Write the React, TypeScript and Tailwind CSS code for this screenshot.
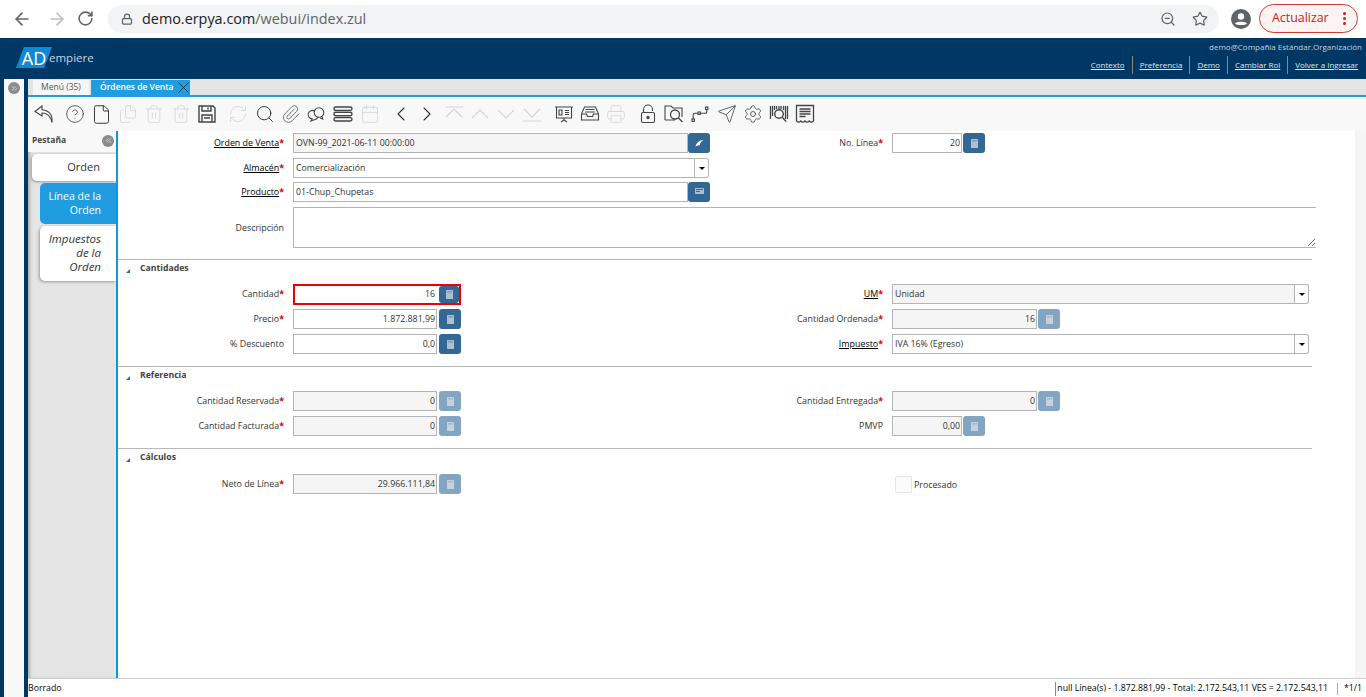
import { ArrowLeft, ArrowRight, RotateCw, Lock, ZoomOut, Star, CircleHelp, File, Files, Trash2, Save, RefreshCw, Search, Paperclip, Calendar, ChevronLeft, ChevronRight, Printer, Send, Settings, ChevronsLeft, ChevronsRight } from "lucide-react";
import type { ReactNode } from "react";

const font = "font-['Open_Sans',sans-serif]";

// small svg wrapper for the toolbar drawings lucide does not have
const Svg = ({ children, muted }: { children: ReactNode; muted?: boolean }) => (
  <svg width="20" height="20" viewBox="0 0 20 20" fill="none" stroke={muted ? "#d4d4d4" : "#444"} strokeWidth="1.1">
    {children}
  </svg>
);

const lucide = { size: 20, strokeWidth: 1 };

const toolbar: { icon: ReactNode; group?: boolean }[] = [
  { icon: <Svg><path d="M8 2 L1 7.5 L8 12 L8 9 C13 9 16.5 12 18 18.5 C18.8 10.5 15 6.5 8 5.8 Z" /></Svg> },
  { group: true, icon: <CircleHelp {...lucide} color="#444" /> },
  { icon: <File size={21} strokeWidth={1.1} color="#333" /> },
  { icon: <Files {...lucide} color="#d4d4d4" /> },
  { icon: <Trash2 {...lucide} color="#d4d4d4" /> },
  { icon: <Trash2 {...lucide} color="#d4d4d4" /> },
  { icon: <Svg><path d="M2 2h14l2 2v14H2z" strokeWidth="1.4" /><path d="M5 2v5h9V2M11 3.5v2M5 18v-7h10v7M7 14h6" strokeWidth="1.4" /></Svg> },
  { group: true, icon: <RefreshCw {...lucide} color="#d4d4d4" /> },
  { icon: <Search size={20} strokeWidth={1.2} color="#333" /> },
  { icon: <Paperclip {...lucide} color="#555" /> },
  { icon: <Svg><circle cx="12" cy="8.500" r="4.800" /><path d="M7.500 7 A4.200 4.200 0 1 0 5.200 14.800 L4 17 L8 15.500 A4.200 4.200 0 0 0 11 13.200" /><path d="M15 12.500l.8 2.500-2.600-.7" /></Svg> },
  { icon: <Svg><rect x="1" y="3" width="18" height="3.4" rx="1.7" strokeWidth="1.4" /><rect x="1" y="8.3" width="18" height="3.4" rx="1.7" strokeWidth="1.4" /><rect x="1" y="13.6" width="18" height="3.4" rx="1.7" strokeWidth="1.4" /></Svg> },
  { icon: <Calendar {...lucide} color="#d4d4d4" /> },
  { group: true, icon: <ChevronLeft size={24} strokeWidth={1.1} color="#333" /> },
  { icon: <ChevronRight size={24} strokeWidth={1.1} color="#333" /> },
  { icon: <Svg muted><path d="M1 3h18M2 13l8-8 8 8" /></Svg> },
  { icon: <Svg muted><path d="M2 14l8-8 8 8" /></Svg> },
  { icon: <Svg muted><path d="M2 6l8 8 8-8" /></Svg> },
  { icon: <Svg muted><path d="M2 5l8 8 8-8M1 17h18" /></Svg> },
  { group: true, icon: <Svg><path d="M1 3h18M2.5 3v11h15V3M10 14v2M7 18l3-2 3 2" /><path d="M5 6h3v5H5zM11 6.5h4M11 8.500h4M11 10.500h4" /></Svg> },
  { icon: <Svg><path d="M4.500 3h11l3 7v6h-17v-6zM1.500 10h5l1 2.500h5l1-2.500h5M5.500 5.500h9M5 8h10" strokeWidth="1.1" /></Svg> },
  { icon: <Printer {...lucide} color="#d4d4d4" /> },
  { group: true, icon: <Svg><path d="M5.500 8.500V5.500a4.500 4.500 0 0 1 9 0V7" /><rect x="3.500" y="8.500" width="13" height="10" rx="1.500" /><circle cx="10" cy="13.500" r="1.100" fill="#444" /></Svg> },
  { icon: <Svg><path d="M1 16V2h6l2 2h9v9M1 16h10" /><circle cx="11" cy="10.500" r="4.500" strokeWidth="1.3" /><path d="M14.500 14l4 4" strokeWidth="1.3" /></Svg> },
  { icon: <Svg><rect x="2" y="15" width="2.400" height="2.400" /><rect x="8" y="8" width="2.400" height="2.400" /><rect x="15.500" y="3" width="2.400" height="2.400" /><path d="M3.200 15v-4.500c0-1 .5-1.300 1.300-1.300H8M10.400 9.200h5c1 0 1.400-.5 1.400-1.300V5.400" /></Svg> },
  { icon: <Send {...lucide} color="#444" /> },
  { icon: <Settings {...lucide} color="#444" /> },
  { icon: <Svg><path d="M1.500 2v13M3.500 2v10M5.500 2v4M7.500 2v3M10 2v3M12 2v3M14.500 2v4M16.500 2v13M18.500 2v13" strokeWidth="1.300" /><circle cx="10" cy="10" r="4.300" fill="#f8f8f8" strokeWidth="1.400" /><path d="M13.200 13.200l4 4.300" strokeWidth="1.400" /></Svg> },
  { icon: <Svg><path d="M1.500 1.500h17v15.500c-1.500 1.500-3 1.500-4.200 0-1.200 1.500-2.800 1.500-4.300 0-1.500 1.500-3 1.500-4.300 0-1.200 1.500-2.700 1.500-4.200 0z" strokeWidth="1.300" /><path d="M4.500 5h11M4.500 7.500h11M4.500 10h11M4.500 12.500h6" strokeWidth="1.300" /></Svg> },
];

const CalcIcon = ({ off }: { off?: boolean }) => (
  <svg width="7" height="9" viewBox="0 0 7 9">
    <rect width="7" height="9" rx="0.5" fill={off ? "#c3d2de" : "#aebfce"} />
    <rect x="1" y="1" width="5" height="1.600" fill={off ? "#a4bbce" : "#7f9db6"} />
  </svg>
);

const CalcBtn = ({ off, className = "" }: { off?: boolean; className?: string }) => (
  <div className={`flex h-5 w-[22px] shrink-0 items-center justify-center rounded-[3px] ${off ? "bg-[#84a5c1]" : "bg-[#336796]"} ${className}`}>
    <CalcIcon off={off} />
  </div>
);

const Label = ({ text, req, link }: { text: string; req?: boolean; link?: boolean }) => (
  <div className="mr-[9px] w-[166px] shrink-0 truncate text-right text-[8.900px] leading-5 text-[#333]">
    <span className={link ? "text-black underline" : ""}>{text}</span>
    {req && <span className="font-bold text-[#e00000]">*</span>}
  </div>
);

const Num = ({ value, w, off, gap = "ml-[2px]" }: { value: string; w: string; off?: boolean; gap?: string }) => (
  <>
    <div className={`h-5 ${w} border border-[#b4b4b4] pl-[2px] pr-[1px] text-right text-[8.800px] leading-[18px] text-[#333] ${off ? "bg-[#f5f5f5]" : "bg-white"}`}>{value}</div>
    <CalcBtn off={off} className={gap} />
  </>
);

const Combo = ({ value, w, off }: { value: string; w: string; off?: boolean }) => (
  <div className="flex h-5">
    <div className={`h-5 ${w} border border-[#b4b4b4] px-[2px] text-[8.800px] leading-[18px] text-[#333] ${off ? "bg-[#f5f5f5]" : "bg-white"}`}>{value}</div>
    <div className="flex h-5 w-[14px] items-center justify-center rounded-r-[3px] border border-l-0 border-[#b4b4b4] bg-white">
      <div className="h-0 w-0 border-x-[3px] border-t-[3px] border-x-transparent border-t-black" />
    </div>
  </div>
);

const Row = ({ left, right, className = "mb-[5px]" }: { left: ReactNode; right?: ReactNode; className?: string }) => (
  <div className={`flex h-5 ${className}`}>
    <div className="flex w-[599px] shrink-0">{left}</div>
    <div className="flex">{right}</div>
  </div>
);

const Section = ({ title, className }: { title: string; className: string }) => (
  <div className={className}>
    <div className="mr-[43px] border-t border-[#b8b8b8]" />
    <div className="flex h-[24px] items-start pt-[2px]">
      <div className="ml-[8px] mt-[7px] h-0 w-0 border-b-[4px] border-l-[4px] border-b-[#1c6fb8] border-l-transparent" />
      <div className="ml-[10px] text-[8.700px] font-bold leading-[12px] text-[#444]">{title}</div>
    </div>
  </div>
);

export default function App() {
  const links = ["Contexto", "Preferencia", "Demo", "Cambiar Rol", "Volver a Ingresar"];

  return (
    <div className={`flex h-[697px] w-full flex-col overflow-hidden bg-white ${font}`}>
      {/* browser bar */}
      <div className="flex h-[38px] shrink-0 items-center bg-white pb-[1px]">
        <ArrowLeft size={20} strokeWidth={2} color="#5f6368" className="ml-[12px]" />
        <ArrowRight size={20} strokeWidth={2} color="#bcbec1" className="ml-[15px]" />
        <RotateCw size={17} strokeWidth={2.2} color="#5f6368" className="ml-[10px]" />
        <div className="ml-[14px] flex h-[28px] w-[1111px] items-center rounded-full bg-[#f1f3f4] pl-[13px] pr-[10px]">
          <Lock size={12} strokeWidth={2.5} color="#5f6368" />
          <div className="ml-[9px] text-[14.400px] text-[#5f6368]">
            <span className="text-[#202124]">demo.erpya.com</span>/webui/index.zul
          </div>
          <ZoomOut size={16} strokeWidth={1.8} color="#5f6368" className="ml-auto mr-[16px]" />
          <Star size={16} strokeWidth={1.8} color="#5f6368" className="mr-[1px]" />
        </div>
        <svg width="20" height="20" viewBox="0 0 20 20" className="ml-[12px]">
          <circle cx="10" cy="10" r="10" fill="#5f6368" />
          <circle cx="10" cy="7.500" r="3.200" fill="white" />
          <path d="M4 14.500c1.500-2.500 10.500-2.500 12 0-1.500 2-10.500 2-12 0z" fill="white" />
        </svg>
        <div className="ml-[8px] flex h-[29px] w-[99px] items-center rounded-full border border-[#d33a31] bg-[#fdf3f2] pl-[12px] text-[12.400px] text-[#c5221f]">
          Actualizar
          <div className="ml-[14px] flex flex-col gap-[2px]">
            <div className="h-[3px] w-[3px] rounded-full bg-[#c5221f]" />
            <div className="h-[3px] w-[3px] rounded-full bg-[#c5221f]" />
            <div className="h-[3px] w-[3px] rounded-full bg-[#c5221f]" />
          </div>
        </div>
      </div>

      {/* app header */}
      <div className="flex h-[41px] shrink-0 justify-between bg-[#003764]">
        <div className="ml-[16px] mt-[9px] flex h-[21px] items-center">
          <div className="flex h-[21px] w-[36px] items-center justify-center bg-[#0f8ad2] text-[18px] leading-none text-white [clip-path:polygon(22%_0,100%_0,78%_100%,0_100%)]">AD</div>
          <div className="-ml-[3px] text-[11.500px] text-[#c9d6e2]">empiere</div>
        </div>
        <div className="flex flex-col items-end pr-[4px]">
          <div className="mt-[3px] text-[8px] leading-[11px] text-[#c2d0dc]">demo@Compañía Estándar.Organización</div>
          <div className="mr-[4px] mt-[4px] flex h-[18px] items-center text-[8px] text-[#dfe7ee]">
            {links.map((l, i) => (
              <div key={l} className={`flex h-[18px] items-center ${i > 0 ? "ml-[7px] border-l border-[#8f8a78] pl-[7px]" : ""}`}>
                <span className="underline">{l}</span>
              </div>
            ))}
          </div>
        </div>
      </div>

      <div className="flex min-h-0 flex-1">
        {/* collapsed west panel */}
        <div className="flex w-[28px] shrink-0 justify-center border-x-4 border-[#003764] bg-[#f8f8f8] pt-[3px]">
          <div className="flex h-[12px] w-[12px] items-center justify-center rounded-full bg-[#8b8b8b]">
            <ChevronsRight size={9} strokeWidth={2} color="#e5e5e5" />
          </div>
        </div>

        <div className="flex min-w-0 flex-1 flex-col">
          {/* window tabs */}
          <div className="flex h-[18px] shrink-0 border-b-2 border-[#1f9de0] bg-[#e4e4e4] pl-[5px] pt-[1px]">
            <div className="flex h-[15px] w-[56px] items-center justify-center bg-[#f6f6f6] text-[8.500px] text-[#555]">Menú (35)</div>
            <div className="ml-[2px] flex h-[15px] w-[99px] items-center bg-[#1f9de0] pl-[9px] text-[8.500px] font-semibold text-white">
              Órdenes de Venta
              <svg width="11" height="11" viewBox="0 0 11 11" className="ml-[5px]" stroke="#17374f" strokeWidth="0.900"><path d="M0.500 0.500l10 10M10.500 0.500l-10 10" /></svg>
            </div>
          </div>

          {/* toolbar */}
          <div className="flex h-[34px] shrink-0 items-center bg-[#f8f8f8] pl-[3px]">
            {toolbar.map((t, i) => (
              <div key={i} className={`flex w-[26.300px] shrink-0 items-center justify-center ${t.group ? "ml-[5px]" : ""}`}>
                {t.icon}
              </div>
            ))}
          </div>

          <div className="flex min-h-0 flex-1 border-b border-[#cfcfcf]">
            {/* tab panel */}
            <div className="flex w-[90px] shrink-0 flex-col border-r-2 border-[#0a96dd] bg-[#e5e5e5] shadow-[inset_3px_0_3px_-1px_#b0b0b0]">
              <div className="flex h-[21px] shrink-0 items-center justify-between bg-[#f8f8f8] pb-[2px] pl-[4px] pr-[2px] text-[8.500px] font-bold text-[#444]">
                Pestaña
                <div className="flex h-[12px] w-[12px] items-center justify-center rounded-full bg-[#8b8b8b]">
                  <ChevronsLeft size={9} strokeWidth={2} color="#e5e5e5" />
                </div>
              </div>
              <div className="ml-[4px] mt-[2px] flex h-[27px] items-center justify-end rounded-l-[5px] bg-white pr-[16px] text-[11px] text-[#333] shadow-[-1px_1px_3px_#999]">Orden</div>
              <div className="ml-[12px] mt-[2px] flex h-[41px] items-center justify-end rounded-l-[5px] bg-[#1f9de0] pb-[2px] pr-[15px] text-right text-[10.500px] leading-[14px] text-white">
                Línea de la<br />Orden
              </div>
              <div className="ml-[12px] mt-[2px] flex h-[55px] items-center justify-end rounded-l-[5px] bg-white pb-[2px] pr-[15px] text-right text-[11.500px] italic leading-[14px] text-[#333] shadow-[-1px_1px_3px_#999]">
                Impuestos<br />de la<br />Orden
              </div>
            </div>

            {/* form */}
            <div className="min-w-0 flex-1 pt-[2px]">
              <Row
                left={<>
                  <Label text="Orden de Venta" req link />
                  <div className="h-5 w-[395px] border border-[#b4b4b4] bg-[#f5f5f5] px-[2px] text-[8.800px] leading-[18px] text-[#333]">OVN-99_2021-06-11 00:00:00</div>
                  <div className="flex h-5 w-[22px] items-center justify-center rounded-[3px] bg-[#336796]">
                    <svg width="9" height="9" viewBox="0 0 9 9"><path d="M8.500 1C4.500 1 1 4 .5 8c1-1.500 2.800-2.200 4.300-1.700C4.800 4.300 6 2.400 8.500 1z" fill="white" /></svg>
                  </div>
                </>}
                right={<><Label text="No. Línea" req /><Num value="20" w="w-[70px]" gap="ml-[1px]" /></>}
              />
              <Row left={<><Label text="Almacén" req link /><Combo value="Comercialización" w="w-[402px]" /></>} className="mb-[4px]" />
              <Row
                left={<>
                  <Label text="Producto" req link />
                  <div className="h-5 w-[395px] border border-[#b4b4b4] bg-white px-[2px] text-[8.800px] leading-[18px] text-[#333]">01-Chup_Chupetas</div>
                  <div className="flex h-5 w-[22px] items-center justify-center rounded-[3px] bg-[#336796]">
                    <svg width="9" height="8" viewBox="0 0 9 8"><rect width="9" height="6" fill="#a9c0d4" /><rect x="1" y="1" width="7" height="1" fill="#336796" /><rect x="1" y="3" width="4" height="1" fill="#336796" /></svg>
                  </div>
                </>}
              />
              <div className="flex h-[41px] items-center">
                <Label text="Descripción" />
                <textarea readOnly className="h-[41px] w-[1023px] border border-r-0 border-[#b4b4b4] bg-white" />
              </div>

              <Section title="Cantidades" className="mt-[11px]" />
              <Row
                className="mb-[4px] h-[21px]"
                left={<>
                  <Label text="Cantidad" req />
                  <div className="flex h-[21px] w-[168px] items-center border-2 border-[#f00000]">
                    <div className="h-[17px] flex-1 pl-[2px] pr-[4px] text-right text-[8.800px] leading-[17px] text-[#333]">16</div>
                    <CalcBtn className="!h-[17px] !w-[20px]" />
                  </div>
                </>}
                right={<><Label text="UM" req link /><Combo value="Unidad" w="w-[403px]" off /></>}
              />
              <Row
                left={<><Label text="Precio" req /><Num value="1.872.881,99" w="w-[144px]" /></>}
                right={<><Label text="Cantidad Ordenada" req /><Num value="16" w="w-[145px]" off gap="ml-[1px]" /></>}
              />
              <Row
                className=""
                left={<><Label text="% Descuento" /><Num value="0,0" w="w-[144px]" /></>}
                right={<><Label text="Impuesto" req link /><Combo value="IVA 16% (Egreso)" w="w-[403px]" /></>}
              />

              <Section title="Referencia" className="mt-[12px]" />
              <Row
                left={<><Label text="Cantidad Reservada" req /><Num value="0" w="w-[144px]" off /></>}
                right={<><Label text="Cantidad Entregada" req /><Num value="0" w="w-[145px]" off gap="ml-[1px]" /></>}
              />
              <Row
                className=""
                left={<><Label text="Cantidad Facturada" req /><Num value="0" w="w-[144px]" off /></>}
                right={<><Label text="PMVP" /><Num value="0,00" w="w-[70px]" off gap="ml-[1px]" /></>}
              />

              <Section title="Cálculos" className="mt-[12px]" />
              <div className="h-px" />
              <Row
                left={<><Label text="Neto de Línea" req /><Num value="29.966.111,84" w="w-[144px]" off /></>}
                right={<>
                  <div className="ml-[178px] mt-[2px] h-[17px] w-[17px] rounded-[2px] border border-[#e6e6e6] bg-[#fbfbfb]" />
                  <div className="ml-[2px] text-[8.800px] leading-[22px] text-[#333]">Procesado</div>
                </>}
              />
            </div>

            {/* scrollbar track */}
            <div className="w-[11px] shrink-0 bg-[#f5f5f5]" />
          </div>

          {/* status bar */}
          <div className="flex h-[18px] shrink-0 items-center justify-between bg-white pt-[2px] text-[8.750px] text-black">
            <div>Borrado</div>
            <div className="flex items-center">
              <div className="border-l border-[#888] pl-[1px]">null Línea(s) - 1.872.881,99 - Total: 2.172.543,11 VES = 2.172.543,11</div>
              <div className="ml-[9px] h-[12px] border-l border-[#aaa]" />
              <div className="ml-[6px] mr-[4px]">*1/1</div>
            </div>
          </div>
        </div>
      </div>
    </div>
  );
}
